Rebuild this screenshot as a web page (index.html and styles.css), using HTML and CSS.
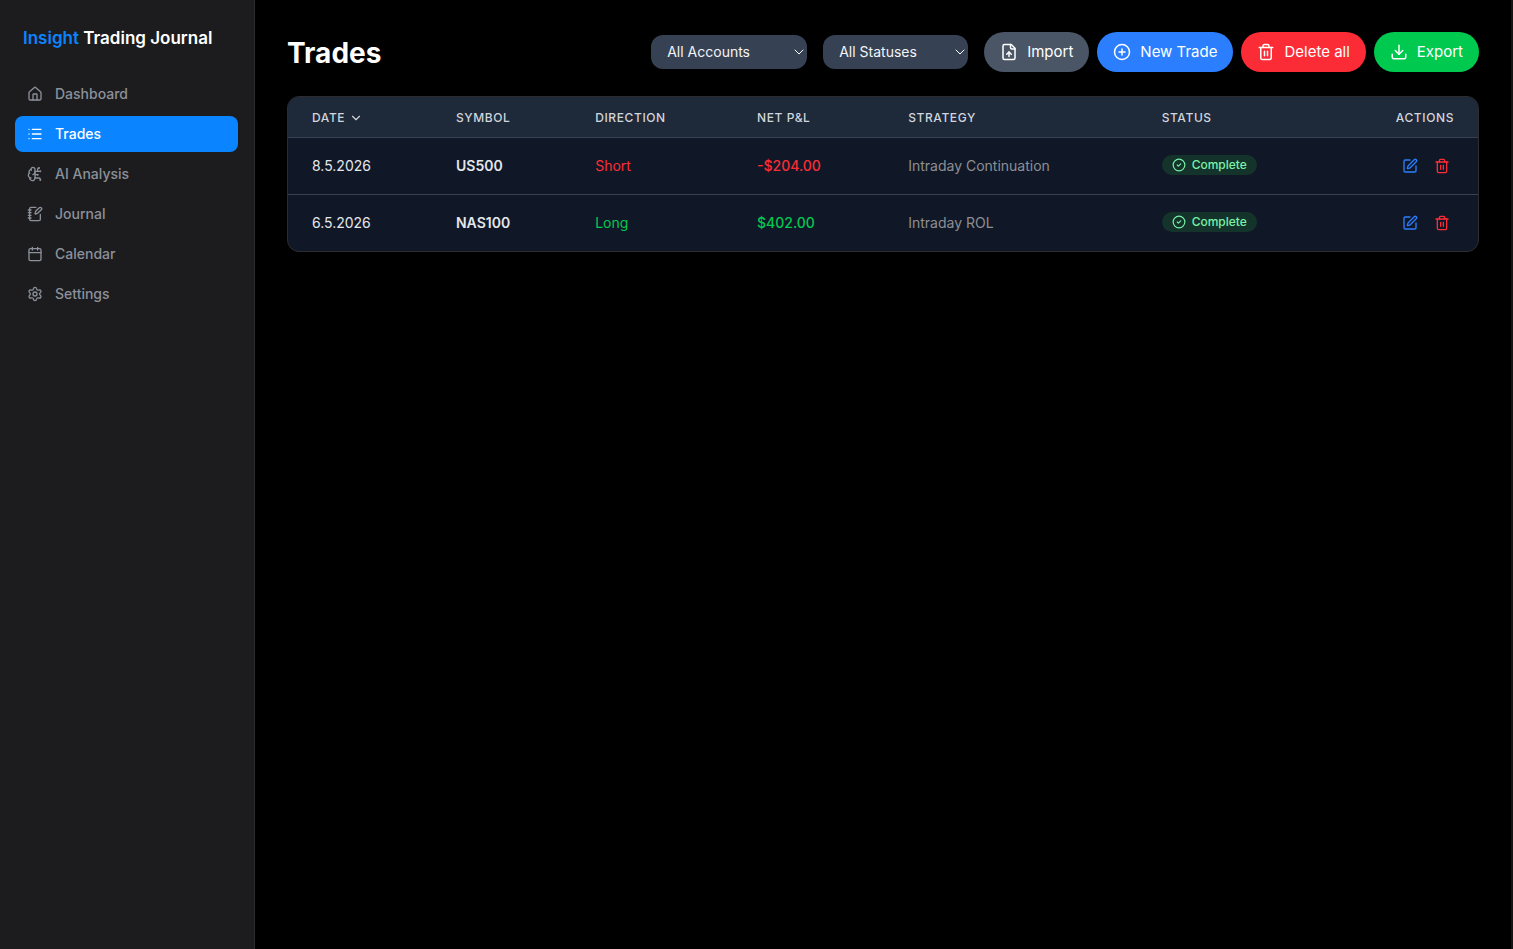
FILE: index.html
```html
<!DOCTYPE html>
<html lang="en">
<head>
<meta charset="utf-8">
<title>Insight Trading Journal</title>
<link rel="stylesheet" href="styles.css">
</head>
<body>
<svg class="sprite" aria-hidden="true">
  <symbol id="house" viewBox="0 0 24 24"><path d="M15 21v-8a1 1 0 0 0-1-1h-4a1 1 0 0 0-1 1v8"/><path d="M3 10a2 2 0 0 1 .709-1.528l7-6a2 2 0 0 1 2.582 0l7 6A2 2 0 0 1 21 10v9a2 2 0 0 1-2 2H5a2 2 0 0 1-2-2z"/></symbol>
  <symbol id="list" viewBox="0 0 24 24"><path d="M3 5h.01M3 12h.01M3 19h.01M8 5h13M8 12h13M8 19h13"/></symbol>
  <symbol id="brain" viewBox="0 0 24 24"><path d="M12 5a3 3 0 1 0-5.997.125 4 4 0 0 0-2.526 5.77 4 4 0 0 0 .556 6.588A4 4 0 1 0 12 18Z"/><path d="M9 13a4.5 4.5 0 0 0 3-4"/><path d="M6.003 5.125A3 3 0 0 0 6.401 6.5"/><path d="M3.477 10.896a4 4 0 0 1 .585-.396"/><path d="M6 18a4 4 0 0 1-1.967-.516"/><path d="M12 13h4"/><path d="M12 18h6a2 2 0 0 1 2 2v1"/><path d="M12 8h8"/><path d="M16 8V5a2 2 0 0 1 2-2"/><circle cx="16" cy="13" r=".5"/><circle cx="18" cy="3" r=".5"/><circle cx="20" cy="21" r=".5"/><circle cx="20" cy="8" r=".5"/></symbol>
  <symbol id="notebook" viewBox="0 0 24 24"><path d="M13.4 2H6a2 2 0 0 0-2 2v16a2 2 0 0 0 2 2h12a2 2 0 0 0 2-2v-7.4"/><path d="M2 6h4M2 10h4M2 14h4M2 18h4"/><path d="M21.378 5.626a1 1 0 1 0-3.004-3.004l-5.01 5.012a2 2 0 0 0-.506.854l-.837 2.87a.5.5 0 0 0 .62.62l2.87-.837a2 2 0 0 0 .854-.506z"/></symbol>
  <symbol id="calendar" viewBox="0 0 24 24"><path d="M8 2v4M16 2v4M3 10h18"/><rect width="18" height="18" x="3" y="4" rx="2"/></symbol>
  <symbol id="gear" viewBox="0 0 24 24"><path d="M9.671 4.136a2.34 2.34 0 0 1 4.659 0 2.34 2.34 0 0 0 3.319 1.915 2.34 2.34 0 0 1 2.33 4.033 2.34 2.34 0 0 0 0 3.831 2.34 2.34 0 0 1-2.33 4.033 2.34 2.34 0 0 0-3.319 1.915 2.34 2.34 0 0 1-4.659 0 2.34 2.34 0 0 0-3.32-1.915 2.34 2.34 0 0 1-2.33-4.033 2.34 2.34 0 0 0 0-3.831A2.34 2.34 0 0 1 6.35 6.051a2.34 2.34 0 0 0 3.319-1.915"/><circle cx="12" cy="12" r="3"/></symbol>
  <symbol id="file-up" viewBox="0 0 24 24"><path d="M15 2H6a2 2 0 0 0-2 2v16a2 2 0 0 0 2 2h12a2 2 0 0 0 2-2V7Z"/><path d="M14 2v4a2 2 0 0 0 2 2h4"/><path d="M12 12v6"/><path d="m15 15-3-3-3 3"/></symbol>
  <symbol id="plus" viewBox="0 0 24 24"><circle cx="12" cy="12" r="10"/><path d="M8 12h8M12 8v8"/></symbol>
  <symbol id="trash" viewBox="0 0 24 24"><path d="M3 6h18"/><path d="M19 6v14a2 2 0 0 1-2 2H7a2 2 0 0 1-2-2V6"/><path d="M8 6V4a2 2 0 0 1 2-2h4a2 2 0 0 1 2 2v2"/><path d="M10 11v6M14 11v6"/></symbol>
  <symbol id="download" viewBox="0 0 24 24"><path d="M12 15V3"/><path d="M21 15v4a2 2 0 0 1-2 2H5a2 2 0 0 1-2-2v-4"/><path d="m7 10 5 5 5-5"/></symbol>
  <symbol id="chevron" viewBox="0 0 24 24"><path d="m6 9 6 6 6-6"/></symbol>
  <symbol id="check" viewBox="0 0 24 24"><circle cx="12" cy="12" r="10"/><path d="m9 12 2 2 4-4"/></symbol>
  <symbol id="edit" viewBox="0 0 24 24"><path d="M12 3H5a2 2 0 0 0-2 2v14a2 2 0 0 0 2 2h14a2 2 0 0 0 2-2v-7"/><path d="M18.375 2.625a1 1 0 0 1 3 3l-9.013 9.014a2 2 0 0 1-.853.505l-2.873.84a.5.5 0 0 1-.62-.62l.84-2.873a2 2 0 0 1 .506-.852z"/></symbol>
</svg>
<div class="app">
  <aside class="sidebar">
    <div class="brand"><span class="brand-accent">Insight</span> Trading Journal</div>
    <nav class="nav">
      <a class="nav-item" href="#dashboard"><svg class="icon"><use href="#house"/></svg>Dashboard</a>
      <a class="nav-item active" href="#trades" aria-current="page"><svg class="icon"><use href="#list"/></svg>Trades</a>
      <a class="nav-item" href="#analysis"><svg class="icon"><use href="#brain"/></svg>AI Analysis</a>
      <a class="nav-item" href="#journal"><svg class="icon"><use href="#notebook"/></svg>Journal</a>
      <a class="nav-item" href="#calendar-page"><svg class="icon"><use href="#calendar"/></svg>Calendar</a>
      <a class="nav-item" href="#settings"><svg class="icon"><use href="#gear"/></svg>Settings</a>
    </nav>
  </aside>
  <main class="main">
    <header class="toolbar">
      <h1 class="title">Trades</h1>
      <div class="controls">
        <div class="filters">
          <div class="picker"><select class="select accounts" aria-label="Account"><option>All Accounts</option></select><svg class="icon picker-arrow"><use href="#chevron"/></svg></div>
          <div class="picker"><select class="select statuses" aria-label="Status"><option>All Statuses</option></select><svg class="icon picker-arrow"><use href="#chevron"/></svg></div>
        </div>
        <div class="buttons">
          <button class="btn gray" type="button"><svg class="icon"><use href="#file-up"/></svg>Import</button>
          <button class="btn blue" type="button"><svg class="icon"><use href="#plus"/></svg>New Trade</button>
          <button class="btn red" type="button"><svg class="icon"><use href="#trash"/></svg>Delete all</button>
          <button class="btn green" type="button"><svg class="icon"><use href="#download"/></svg>Export</button>
        </div>
      </div>
    </header>
    <div class="card">
      <table class="table">
        <colgroup><col class="c-date"><col class="c-symbol"><col class="c-direction"><col class="c-pnl"><col class="c-strategy"><col class="c-status"><col></colgroup>
        <thead>
          <tr>
            <th scope="col"><button class="sort" type="button">DATE<svg class="icon"><use href="#chevron"/></svg></button></th>
            <th scope="col">SYMBOL</th><th scope="col">DIRECTION</th><th scope="col">NET P&amp;L</th><th scope="col">STRATEGY</th>
            <th scope="col">STATUS</th><th scope="col" class="end">ACTIONS</th>
          </tr>
        </thead>
        <tbody>
          <tr>
            <td>8.5.2026</td><td class="symbol">US500</td><td class="loss">Short</td><td class="loss strong">-$204.00</td><td class="muted">Intraday Continuation</td>
            <td class="status"><span class="badge"><svg class="icon"><use href="#check"/></svg>Complete</span></td>
            <td><div class="actions"><button class="act edit" type="button" aria-label="Edit"><svg class="icon"><use href="#edit"/></svg></button><button class="act remove" type="button" aria-label="Delete"><svg class="icon"><use href="#trash"/></svg></button></div></td>
          </tr>
          <tr>
            <td>6.5.2026</td><td class="symbol">NAS100</td><td class="gain">Long</td><td class="gain strong">$402.00</td><td class="muted">Intraday ROL</td>
            <td class="status"><span class="badge"><svg class="icon"><use href="#check"/></svg>Complete</span></td>
            <td><div class="actions"><button class="act edit" type="button" aria-label="Edit"><svg class="icon"><use href="#edit"/></svg></button><button class="act remove" type="button" aria-label="Delete"><svg class="icon"><use href="#trash"/></svg></button></div></td>
          </tr>
        </tbody>
      </table>
    </div>
  </main>
</div>
</body>
</html>
```
FILE: styles.css
```css
* { box-sizing: border-box; }
body { margin: 0; background: #000; color: #fff; font-family: Inter, "Liberation Sans", sans-serif; font-size: 14px; line-height: 20px; }
button, select { font: inherit; color: inherit; border: 0; margin: 0; cursor: pointer; }
.sprite { position: absolute; width: 0; height: 0; }
.icon { width: 16px; height: 16px; flex: none; fill: none; stroke: currentColor; stroke-width: 2; stroke-linecap: round; stroke-linejoin: round; }
.app { display: flex; min-height: 100vh; }

.sidebar { flex: none; width: 255px; background: #1c1c1e; border-right: 1px solid #2c2c2e; padding: 24px 16px 24px 15px; }
.brand { padding: 0 8px; font-size: 17px; line-height: 28px; font-weight: 600; white-space: nowrap; }
.brand-accent { color: #0a84ff; }
.nav { display: flex; flex-direction: column; gap: 4px; margin-top: 24px; }
.nav-item { display: flex; align-items: center; gap: 12px; padding: 8px 12px; border-radius: 8px; color: #8b909a; font-weight: 500; text-decoration: none; }
.nav-item.active { background: #0a84ff; color: #fff; }

.main { flex: 1; min-width: 0; padding: 32px; border-right: 2px solid #141414; }
.toolbar { display: flex; align-items: center; justify-content: space-between; margin-bottom: 24px; }
.title { margin: 0; padding-top: 2px; font-size: 28px; line-height: 36px; font-weight: 700; }
.controls, .filters { display: flex; align-items: center; gap: 16px; }
.buttons { display: flex; gap: 8px; }
.picker { position: relative; }
.select { appearance: none; display: block; height: 34px; padding: 0 16px; border-radius: 12px; background: #364153; color: #f3f4f6; }
.accounts { width: 156px; }
.statuses { width: 145px; }
.picker-arrow { position: absolute; top: 9px; right: 0; stroke-width: 1.5; pointer-events: none; }
.btn { display: flex; align-items: center; gap: 9px; height: 40px; padding: 0 16px; border-radius: 20px; font-size: 15px; white-space: nowrap; }
.btn .icon { width: 18px; height: 18px; }
.gray { background: #4a5565; }
.blue { background: #2b7fff; }
.red { background: #fb2c36; }
.green { background: #00c950; }

.card { border: 1px solid #2c2c2e; border-radius: 12px; overflow: hidden; background: #101828; }
.table { width: 100%; table-layout: fixed; border-collapse: separate; border-spacing: 0; }
.c-date { width: 12.1%; }
.c-symbol { width: 11.7%; }
.c-direction { width: 13.6%; }
.c-pnl { width: 12.7%; }
.c-strategy { width: 21.3%; }
.c-status { width: 15.8%; }
th { height: 41px; padding: 1px 24px 0; background: #1e2939; border-bottom: 1px solid #364153; color: #d1d5dc; font-size: 12px; line-height: 16px; font-weight: 500; letter-spacing: 0.6px; text-align: left; }
th.end { text-align: right; }
td { height: 57px; padding: 0 24px; border-bottom: 1px solid #364153; color: #e5e7eb; white-space: nowrap; }
tbody tr:last-child td { height: 56px; border-bottom: 0; }
.sort { display: flex; align-items: center; gap: 4px; padding: 0; background: none; letter-spacing: inherit; }
.sort .icon { width: 14px; height: 14px; }
.symbol { font-weight: 600; }
.strong { font-weight: 500; }
td.loss { color: #fb2c36; }
td.gain { color: #00c950; }
td.muted { color: #8e8e93; }
td.status { padding-bottom: 2px; }
.badge { display: flex; width: fit-content; align-items: center; gap: 6px; height: 20px; padding: 0 10px; border-radius: 10px; background: #14342b; color: #7bf1a8; font-size: 12px; font-weight: 500; }
.badge .icon { width: 14px; height: 14px; }
.actions { display: flex; justify-content: flex-end; gap: 8px; }
.act { display: flex; padding: 4px; background: none; }
.edit { color: #2b7fff; }
.remove { color: #fb2c36; }
```
